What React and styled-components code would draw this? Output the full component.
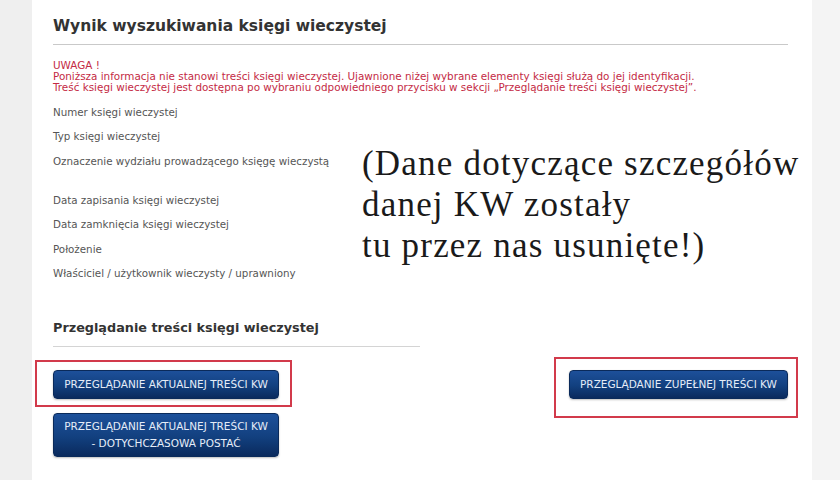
import React from 'react'
import styled, { createGlobalStyle } from 'styled-components'

const Global = createGlobalStyle`
  html, body {
    margin: 0;
    padding: 0;
    background: #f0f0f0;
  }
  body {
    font-family: "DejaVu Sans", Verdana, sans-serif;
  }
`

const Page = styled.div`
  display: flex;
  width: 840px;
  height: 480px;
  overflow: hidden;
  background: linear-gradient(90deg, #efefef 0 32px, #ffffff 32px 812px, #f4f4f4 812px);
`

const Panel = styled.div`
  width: 780px;
  margin-left: 32px;
  padding: 17px 24px 0 21px;
  box-sizing: border-box;
  background: #fff;
`

const Title = styled.h1`
  margin: 0;
  padding-bottom: 9px;
  font-size: 15.5px;
  font-weight: bold;
  color: #333;
  border-bottom: 1px solid #c9c9c9;
`

const Warning = styled.div`
  margin-top: 15px;
  font-size: 10.4px;
  line-height: 11px;
  color: #c42a44;
`

const Details = styled.div`
  display: flex;
  margin-top: 13px;
`

const Labels = styled.ul`
  list-style: none;
  margin: 0;
  padding: 0;
  width: 309px;
  flex-shrink: 0;
`

const Label = styled.li`
  font-size: 10.3px;
  line-height: 12px;
  color: #555;
  margin-bottom: ${p => (p.$gap ? '27px' : '12.4px')};
`

const Note = styled.p`
  margin: 37px 0 0 0;
  font-family: "Liberation Serif", "Times New Roman", serif;
  font-size: 35px;
  letter-spacing: 1.2px;
  line-height: 41px;
  color: #1a1a1a;
  white-space: nowrap;
`

const Subtitle = styled.h2`
  margin: 29px 0 0 0;
  width: 367px;
  padding-bottom: 11px;
  font-size: 12.8px;
  font-weight: bold;
  color: #333;
  border-bottom: 1px solid #d4d4d4;
`

const Actions = styled.div`
  display: flex;
  justify-content: space-between;
  align-items: flex-start;
  margin-top: 23px;
`

const Column = styled.div`
  display: flex;
  flex-direction: column;
  gap: 6px;
`

const Marked = styled.div`
  border: 2px solid #d23a4b;
  padding: ${p => p.$pad};
  margin: ${p => p.$margin};
  align-self: flex-start;
`

const Button = styled.button`
  display: block;
  width: ${p => p.$width || '226px'};
  min-height: 29px;
  padding: 4px 4px;
  border: 1px solid #0a2a5a;
  border-radius: 4px;
  background: linear-gradient(180deg, #1d509a 0%, #12407f 55%, #0a2a5d 100%);
  color: #e6edf8;
  font-family: "DejaVu Sans", Verdana, sans-serif;
  font-size: 10.5px;
  line-height: 17px;
  text-align: center;
  white-space: nowrap;
  box-shadow: 0 1px 2px rgba(0, 0, 0, 0.25);
  cursor: pointer;
`

export default function App() {
  return (
    <>
      <Global />
      <Page>
        <Panel>
          <Title>Wynik wyszukiwania księgi wieczystej</Title>
          <Warning>
            UWAGA !<br />
            Poniższa informacja nie stanowi treści księgi wieczystej. Ujawnione niżej wybrane elementy księgi służą do jej identyfikacji.<br />
            Treść księgi wieczystej jest dostępna po wybraniu odpowiedniego przycisku w sekcji „Przeglądanie treści księgi wieczystej”.
          </Warning>
          <Details>
            <Labels>
              <Label>Numer księgi wieczystej</Label>
              <Label>Typ księgi wieczystej</Label>
              <Label $gap>Oznaczenie wydziału prowadzącego księgę wieczystą</Label>
              <Label>Data zapisania księgi wieczystej</Label>
              <Label>Data zamknięcia księgi wieczystej</Label>
              <Label>Położenie</Label>
              <Label>Właściciel / użytkownik wieczysty / uprawniony</Label>
            </Labels>
            <Note>
              (Dane dotyczące szczegółów<br />
              danej KW zostały<br />
              tu przez nas usunięte!)
            </Note>
          </Details>
          <Subtitle>Przeglądanie treści księgi wieczystej</Subtitle>
          <Actions>
            <Column>
              <Marked $pad="8px 11px 6px 16px" $margin="-10px 0 0 -18px">
                <Button>PRZEGLĄDANIE AKTUALNEJ TREŚCI KW</Button>
              </Marked>
              <Button>
                PRZEGLĄDANIE AKTUALNEJ TREŚCI KW<br />- DOTYCHCZASOWA POSTAĆ
              </Button>
            </Column>
            <Marked $pad="11px 8px 17px 13px" $margin="-13px -10px 0 0">
              <Button $width="219px">PRZEGLĄDANIE ZUPEŁNEJ TREŚCI KW</Button>
            </Marked>
          </Actions>
        </Panel>
      </Page>
    </>
  )
}
